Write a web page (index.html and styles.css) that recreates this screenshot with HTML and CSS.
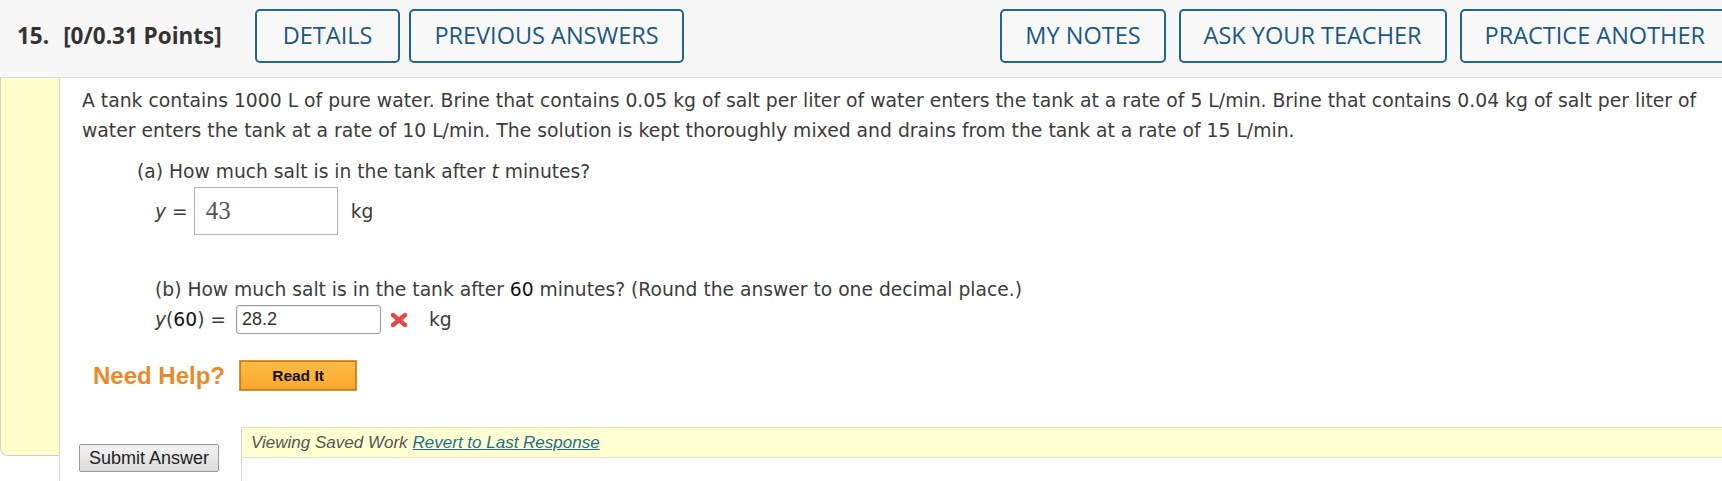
FILE: index.html
```html
<!DOCTYPE html>
<html>
<head>
<meta charset="utf-8">
<title>Question 15</title>
<link rel="stylesheet" href="styles.css">
</head>
<body>
<div class="header">
  <div class="left">
    <div class="title"><span class="qnum">15.</span><span class="pts">[0/0.31 Points]</span></div>
    <div class="btns">
      <span class="btn btn-wide">DETAILS</span>
      <span class="btn">PREVIOUS ANSWERS</span>
    </div>
  </div>
  <div class="btns right">
    <span class="btn">MY NOTES</span>
    <span class="btn">ASK YOUR TEACHER</span>
    <span class="btn">PRACTICE ANOTHER</span>
  </div>
</div>
<div class="question">
  <div class="sidebar"></div>
  <div class="main">
    <div class="content">
      <p class="para">A tank contains 1000 L of pure water. Brine that contains 0.05 kg of salt per liter of water enters the tank at a rate of 5 L/min. Brine that contains 0.04 kg of salt per liter of water enters the tank at a rate of 10 L/min. The solution is kept thoroughly mixed and drains from the tank at a rate of 15 L/min.</p>
      <p class="part-q">(a) How much salt is in the tank after <i>t</i> minutes?</p>
      <div class="ans-row ans-a">
        <span class="lhs"><i>y</i> =</span>
        <span class="box-a">43</span>
        <span class="unit">kg</span>
      </div>
      <p class="part-q part-b">(b) How much salt is in the tank after <span class="mathnum">60</span> minutes? (Round the answer to one decimal place.)</p>
      <div class="ans-row ans-b">
        <span class="lhs"><i>y</i>(<span class="mathnum">60</span>) =</span>
        <span class="box-b">28.2</span>
        <svg class="xmark" viewBox="0 0 20 16" width="20" height="16"><path d="M4 3 L16 13 M16 3 L4 13" stroke="#e5474c" stroke-width="4.4" stroke-linecap="round" fill="none"/></svg>
        <span class="unit">kg</span>
      </div>
      <div class="help">
        <span class="need">Need Help?</span>
        <span class="readit">Read It</span>
      </div>
    </div>
    <div class="submit-row">
      <div class="submit-cell"><span class="submit">Submit Answer</span></div>
      <div class="saved-cell">
        <div class="saved-bar"><span class="saved-text">Viewing Saved Work</span><a class="revert" href="#">Revert to Last Response</a></div>
      </div>
    </div>
  </div>
</div>
</body>
</html>
```

FILE: styles.css
```css
html, body {
  margin: 0;
  padding: 0;
  overflow: hidden;
  background: #ffffff;
}
body {
  width: 1722px;
  height: 481px;
  font-family: "DejaVu Sans", Verdana, sans-serif;
  color: #3c3c3c;
}

/* header */
.header {
  display: flex;
  justify-content: space-between;
  align-items: flex-start;
  width: 1730px;
  height: 78px;
  box-sizing: border-box;
  padding: 9px 0 0 17px;
  background: #f7f7f7;
  border-bottom: 1px solid #dcdcdc;
  font-family: "Open Sans", sans-serif;
}
.left {
  display: flex;
  align-items: center;
}
.title {
  font-weight: 700;
  font-size: 22.5px;
  color: #333333;
  line-height: 54px;
  margin-right: 33px;
  white-space: nowrap;
}
.qnum {
  margin-right: 14px;
}
.btns {
  display: flex;
  gap: 9px;
}
.right {
  gap: 13px;
}
.btn {
  height: 54px;
  box-sizing: border-box;
  display: flex;
  align-items: center;
  padding: 0 23px;
  border: 2px solid #206592;
  border-radius: 5px;
  color: #1b5886;
  font-size: 23.5px;
  line-height: 1;
  white-space: nowrap;
  background: #f8f8f8;
}
.btn-wide {
  padding: 0 26px;
}

/* question body */
.question {
  display: grid;
  grid-template-columns: 59px 1fr;
}
.sidebar {
  align-self: start;
  height: 378px;
  box-sizing: border-box;
  background: #ffffcc;
  border-left: 1px solid #cfcfcf;
  border-bottom: 1px solid #cfcfcf;
  border-bottom-left-radius: 8px;
}
.main {
  background: #ffffff;
  border-left: 1px solid #d8d8d8;
}
.content {
  padding: 8px 10px 0 22px;
}
.para {
  margin: 0;
  font-size: 18.8px;
  line-height: 30px;
}
.part-q {
  margin: 11px 0 0 55px;
  font-size: 18.7px;
  line-height: 30px;
}
.part-b {
  margin: 40px 0 0 73px;
}
.mathnum {
  color: #111111;
}
.ans-row {
  display: flex;
  align-items: center;
  margin-left: 73px;
  font-size: 18.7px;
}
.ans-a {
  height: 48px;
}
.box-a {
  width: 144px;
  height: 48px;
  box-sizing: border-box;
  display: flex;
  align-items: center;
  margin-left: 6px;
  padding-left: 11px;
  border: 1px solid #b5b5b5;
  font-family: "Liberation Serif", serif;
  font-size: 25px;
  color: #555555;
}
.unit {
  margin-left: 13px;
}
.ans-b {
  height: 29px;
}
.box-b {
  width: 145px;
  height: 29px;
  box-sizing: border-box;
  display: flex;
  align-items: center;
  margin-left: 10px;
  padding-left: 5px;
  border: 1px solid #9a9a9a;
  border-radius: 3px;
  box-shadow: inset 1px 1px 1px rgba(0, 0, 0, 0.08);
  font-family: "Liberation Sans", Arial, sans-serif;
  font-size: 18px;
  color: #333333;
}
.xmark {
  margin-left: 8px;
  display: block;
}
.ans-b .unit {
  margin-left: 20px;
}

/* help */
.help {
  display: flex;
  align-items: center;
  height: 31px;
  margin: 26px 0 0 11px;
}
.need {
  font-family: "Liberation Sans", Arial, sans-serif;
  font-weight: bold;
  font-size: 24px;
  color: #e98a2a;
}
.readit {
  display: flex;
  align-items: center;
  justify-content: center;
  width: 118px;
  height: 31px;
  box-sizing: border-box;
  margin-left: 14px;
  border: 1px solid #e0912f;
  box-shadow: inset 0 0 0 1px #c97a1c;
  background: linear-gradient(#fdbb45, #f9a82a);
  font-family: "Liberation Sans", Arial, sans-serif;
  font-weight: bold;
  font-size: 15.5px;
  color: #111111;
}

/* submit row */
.submit-row {
  display: grid;
  grid-template-columns: 181px 1fr;
  height: 60px;
  margin-top: 36px;
}
.submit-cell {
  padding: 17px 0 0 19px;
}
.submit {
  display: inline-block;
  height: 28px;
  box-sizing: border-box;
  padding: 0 9px;
  line-height: 26px;
  border: 1px solid #9a9a9a;
  border-radius: 2px;
  background: linear-gradient(#f3f3f3, #dcdcdc);
  font-family: "Liberation Sans", Arial, sans-serif;
  font-size: 18px;
  color: #222222;
  white-space: nowrap;
}
.saved-cell {
  border-left: 1px solid #d8d8d8;
}
.saved-bar {
  display: flex;
  align-items: center;
  height: 31px;
  box-sizing: border-box;
  padding-left: 9px;
  background: #ffffd2;
  border-top: 1px solid #e2e2c6;
  border-bottom: 1px solid #e2e2c6;
  font-family: "Liberation Sans", Arial, sans-serif;
  font-style: italic;
  font-size: 17px;
  color: #555555;
}
.revert {
  margin-left: 5px;
  color: #1d6e8e;
  text-decoration: underline;
}
```
